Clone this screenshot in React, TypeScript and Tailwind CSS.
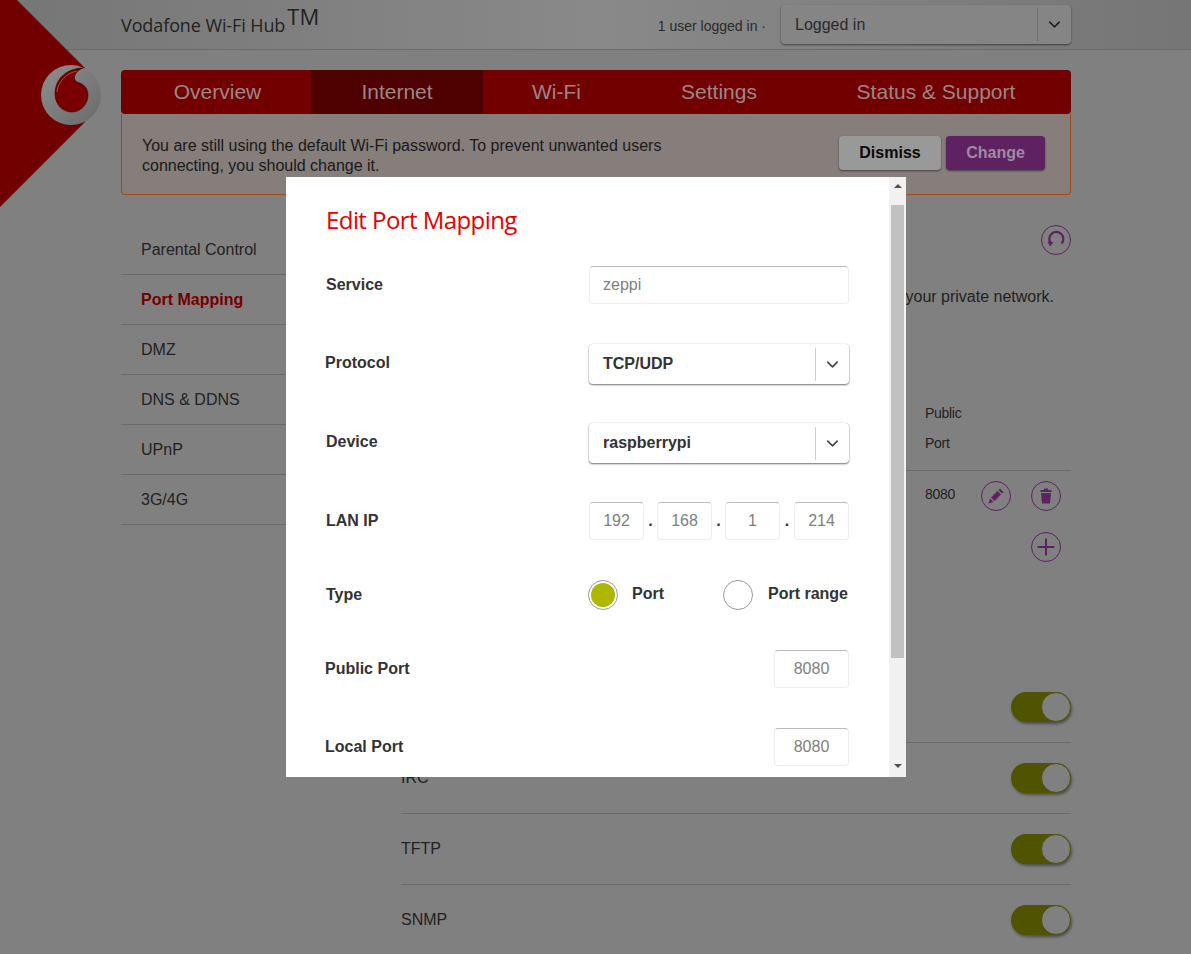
import { ChevronDown } from 'lucide-react';

const sideItems = ['Parental Control', 'Port Mapping', 'DMZ', 'DNS & DDNS', 'UPnP', '3G/4G'];
const toggleRows = ['FTP', 'IRC', 'TFTP', 'SNMP'];

function CircleIcon({ children }: { children: React.ReactNode }) {
  return (
    <div className="flex h-[30px] w-[30px] items-center justify-center rounded-full border border-[#5e2260]">
      <svg width="20" height="20" viewBox="0 0 20 20">{children}</svg>
    </div>
  );
}

function SelectBox({ label }: { label: string }) {
  return (
    <div className="flex h-10 w-[260px] items-center rounded bg-white pl-[14px] shadow-[0_1px_2px_rgba(0,0,0,0.55),0_0_1px_rgba(0,0,0,0.2)]">
      <span className="flex-1 text-base font-bold text-[#333]">{label}</span>
      <div className="h-[33px] w-px bg-[#ccc]" />
      <div className="flex w-[33px] justify-center text-[#444]">
        <ChevronDown size={19} strokeWidth={2} />
      </div>
    </div>
  );
}

function TextBox({ value, className }: { value: string; className: string }) {
  return (
    <div
      className={`flex h-[38px] items-center rounded border border-[#eee] border-t-[#bbb] bg-white text-base font-normal text-[#808080] ${className}`}
    >
      {value}
    </div>
  );
}

function Radio({ checked }: { checked?: boolean }) {
  return (
    <div className="flex h-[30px] w-[30px] items-center justify-center rounded-full border border-[#999] bg-white">
      {checked && <div className="h-6 w-6 rounded-full bg-[#aeb700]" />}
    </div>
  );
}

function Logo() {
  return (
    <svg className="absolute left-[41px] top-[65px]" width="60" height="60" viewBox="0 0 60 60">
      <defs>
        <linearGradient id="ring" x1="0" y1="0" x2="1" y2="1">
          <stop offset="0" stopColor="#8e8e8e" />
          <stop offset="1" stopColor="#6a6a6a" />
        </linearGradient>
        <radialGradient id="drop" cx="0.5" cy="0.55" r="0.6">
          <stop offset="0" stopColor="#7c0000" />
          <stop offset="0.75" stopColor="#780000" />
          <stop offset="1" stopColor="#4a0000" />
        </radialGradient>
      </defs>
      <circle cx="30" cy="30" r="30" fill="url(#ring)" />
      <path
        d="M42 3 C28 3 14 12 14 29 C14 39 21 47 31 47 C40 47 47 39 47 30 C47 21 40 18 36 17 C33 15 33 12 34 10 C36 6 39 4 42 3Z"
        fill="url(#drop)"
        stroke="#4a0000"
        strokeWidth="0.6"
      />
      <path d="M16 27 C17 16 26 8 36 6" fill="none" stroke="#b06060" strokeWidth="0.8" />
    </svg>
  );
}

export default function App() {
  return (
    <div className="relative h-[954px] overflow-hidden bg-[#808080] font-['Liberation_Sans',sans-serif] text-[#1f1f1f]">
      {/* header */}
      <header className="flex h-[50px] items-center border-b border-[#6b6b6b] bg-gradient-to-r from-[#767676] via-[#898989] to-[#767676] pl-[121px] pr-[120px]">
        <div className="flex flex-1 items-start font-['Open_Sans',sans-serif] text-[#222]">
          <span className="text-[18px] leading-[26px] tracking-[-0.1px]">Vodafone Wi-Fi Hub</span>
          <span className="-mt-[9px] ml-[2px] text-[22px] leading-[26px]">TM</span>
        </div>
        <span className="mr-[15px] mt-[2px] text-sm text-[#2a2a2a]">1 user logged in ·</span>
        <div className="flex h-[39px] w-[290px] items-center rounded bg-[#858585] pl-[14px] shadow-[0_1px_2px_rgba(0,0,0,0.5)]">
          <span className="flex-1 text-base text-[#2a2a2a]">Logged in</span>
          <div className="h-[33px] w-px bg-[#6b6b6b]" />
          <div className="flex w-[33px] justify-center text-[#222]">
            <ChevronDown size={19} strokeWidth={2} />
          </div>
        </div>
      </header>

      {/* red corner + logo */}
      <svg className="absolute left-0 top-0" width="90" height="210" viewBox="0 0 90 210">
        <polygon points="0,0 17,0 85,68 85,122 0,207" fill="#730000" />
      </svg>
      <Logo />

      <div className="ml-[121px] w-[950px] pt-5">
        {/* nav */}
        <nav className="flex h-11 overflow-hidden rounded-[4px] bg-[#730000] text-[21px] leading-[44px] text-[#9c8686]">
          <div className="w-[190px] pl-[3px] text-center">Overview</div>
          <div className="w-[172px] bg-[#4f0000] text-center">Internet</div>
          <div className="w-[147px] text-center">Wi-Fi</div>
          <div className="w-[178px] text-center">Settings</div>
          <div className="w-[263px] pr-[7px] text-center">Status &amp; Support</div>
        </nav>

        {/* alert */}
        <div className="flex h-[81px] items-start justify-between rounded-b-[4px] border border-t-0 border-[#a84a10] bg-[#857e7b] pl-5 pr-[25px] pt-[22px]">
          <p className="w-[540px] text-base leading-5 text-[#1a1a1a]">
            You are still using the default Wi-Fi password. To prevent unwanted users connecting, you should change it.
          </p>
          <div className="flex gap-[5px]">
            <div className="flex h-[34px] w-[102px] items-center justify-center rounded bg-[#999] text-base font-bold text-[#0a0a0a] shadow-[0_1px_2px_rgba(0,0,0,0.5)]">
              Dismiss
            </div>
            <div className="flex h-[34px] w-[99px] items-center justify-center rounded bg-[#5e2260] text-base font-bold text-[#a08aa5] shadow-[0_1px_2px_rgba(0,0,0,0.5)]">
              Change
            </div>
          </div>
        </div>

        <div className="mt-[30px] flex gap-[30px]">
          {/* side menu */}
          <aside className="w-[250px]">
            {sideItems.map((item) => (
              <div
                key={item}
                className={`flex h-[50px] items-center border-b border-[#6b6b6b] pl-5 text-base ${
                  item === 'Port Mapping' ? 'font-bold text-[#730000]' : 'text-[#222]'
                }`}
              >
                {item}
              </div>
            ))}
          </aside>

          <main className="w-[670px]">
            <div className="flex justify-end">
              <CircleIcon>
                <path d="M4.6 13 A7 7 0 1 1 15.6 13.5" fill="none" stroke="#5e2260" strokeWidth="2.2" />
                <path d="M1.5 11.5 L7.5 12 L4 16.5Z" fill="#5e2260" />
              </CircleIcon>
            </div>

            <p className="mt-[30px] pr-[17px] text-right text-base leading-6 text-[#222]">your private network.</p>

            <div className="mt-[89px] border-b border-[#6b6b6b] pb-3 pl-[524px] text-sm leading-[30px] tracking-[-0.3px] text-[#222]">
              <div>Public</div>
              <div>Port</div>
            </div>

            <div className="flex pl-[524px] pr-[10px] pt-[10px]">
              <span className="w-[56px] text-sm leading-[26px] tracking-[-0.3px] text-[#222]">8080</span>
              <CircleIcon>
                <path d="M2.5 17.5 L4 12.5 L7.5 16Z M5 11.5 L11.5 5 L15 8.5 L8.5 15Z M12.5 4 L14 2.5 L17.5 6 L16 7.5Z" fill="#5e2260" />
              </CircleIcon>
              <div className="ml-5">
                <CircleIcon>
                  <path d="M8 2.5 H12 V4 H15.5 V6 H4.5 V4 H8Z M5 7 H15 L14 17.5 H6Z" fill="#5e2260" />
                </CircleIcon>
              </div>
            </div>

            <div className="mt-[21px] flex justify-end pr-[10px]">
              <CircleIcon>
                <path d="M10 1.5 V18.5 M1.5 10 H18.5" stroke="#5e2260" strokeWidth="2" />
              </CircleIcon>
            </div>

            <div className="mt-[110px]">
              {toggleRows.map((row) => (
                <div key={row} className="flex h-[71px] items-center justify-between border-b border-[#6b6b6b] pb-px text-base text-[#222]">
                  <span>{row}</span>
                  <div className="flex h-[30px] w-[60px] justify-end rounded-full bg-[#505400] shadow-[1px_2px_3px_rgba(0,0,0,0.4)]">
                    <div className="h-[30px] w-[30px] rounded-full border border-[#505400] bg-[#808080]" />
                  </div>
                </div>
              ))}
            </div>
          </main>
        </div>
      </div>

      {/* modal */}
      <div className="absolute left-[286px] top-[177px] flex h-[600px] w-[620px] overflow-hidden bg-white text-[#333]">
        <div className="flex-1 pl-10 pr-10">
          <h2 className="h-[89px] pt-[24px] font-['Open_Sans',sans-serif] text-[24px] leading-[38px] tracking-[-0.57px] text-[#e60000]">
            Edit Port Mapping
          </h2>

          <div className="flex items-center justify-between font-bold">
            <span>Service</span>
            <TextBox value="zeppi" className="w-[260px] pl-[13px]" />
          </div>

          <div className="mt-10 flex items-center justify-between font-bold">
            <span className="-mb-px -ml-px -mt-[3px]">Protocol</span>
            <SelectBox label="TCP/UDP" />
          </div>

          <div className="mt-[39px] flex items-center justify-between font-bold">
            <span className="-mt-[3px]">Device</span>
            <SelectBox label="raspberrypi" />
          </div>

          <div className="mt-[39px] flex items-center justify-between font-bold">
            <span>LAN IP</span>
            <div className="flex w-[260px]">
              <TextBox value="192" className="w-[55px] justify-center" />
              <span className="w-[13px] text-center text-base leading-[38px]">.</span>
              <TextBox value="168" className="w-[55px] justify-center" />
              <span className="w-[13px] text-center text-base leading-[38px]">.</span>
              <TextBox value="1" className="w-[55px] justify-center" />
              <span className="w-[14px] text-center text-base leading-[38px]">.</span>
              <TextBox value="214" className="w-[55px] justify-center" />
            </div>
          </div>

          <div className="mt-10 flex items-center justify-between font-bold">
            <span>Type</span>
            <div className="flex w-[261px] items-center justify-between pr-px">
              <div className="flex items-center gap-[14px]">
                <Radio checked />
                <span className="-mt-[2px]">Port</span>
              </div>
              <div className="flex items-center gap-[15px]">
                <Radio />
                <span className="-mt-[2px]">Port range</span>
              </div>
            </div>
          </div>

          <div className="mt-10 flex items-center justify-between font-bold">
            <span className="-ml-px">Public Port</span>
            <TextBox value="8080" className="w-[75px] justify-center" />
          </div>

          <div className="mt-10 flex items-center justify-between font-bold">
            <span className="-ml-px">Local Port</span>
            <TextBox value="8080" className="w-[75px] justify-center" />
          </div>
        </div>

        {/* scrollbar */}
        <div className="flex w-[17px] flex-col items-center bg-[#f1f1f1]">
          <div className="mt-[7px] h-0 w-0 border-x-[4px] border-b-[4px] border-x-transparent border-b-[#505050]" />
          <div className="mt-[17px] h-[453px] w-[13px] bg-[#c1c1c1]" />
          <div className="mt-[106px] h-0 w-0 border-x-[4px] border-t-[4px] border-x-transparent border-t-[#505050]" />
        </div>
      </div>
    </div>
  );
}
